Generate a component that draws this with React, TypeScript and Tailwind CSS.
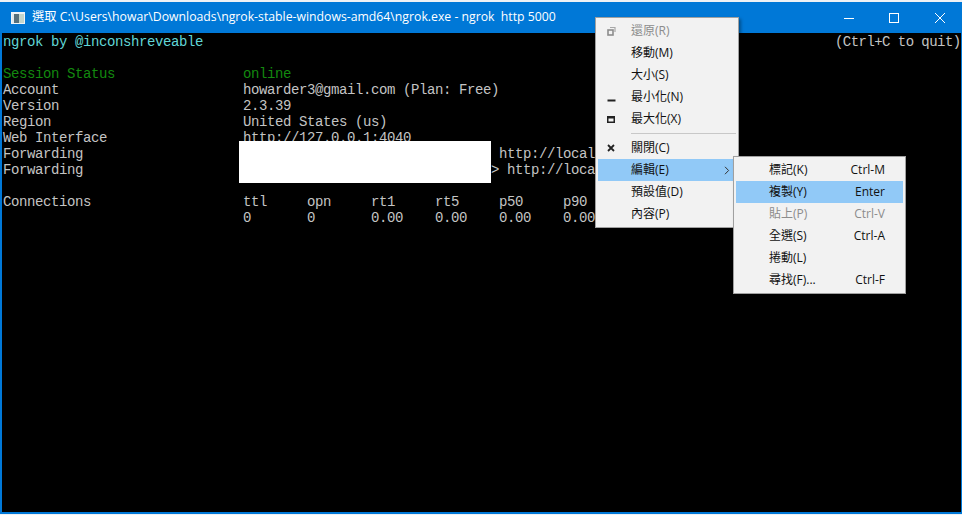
import type { ReactNode } from 'react';

const menuFont = { fontFamily: '"Open Sans", "Noto Sans CJK TC", sans-serif' };

const rows: { text: string; color?: string }[] = [
  { text: '' },
  { text: 'Session Status                online', color: 'text-[#13890f]' },
  { text: 'Account                       howarder3@gmail.com (Plan: Free)' },
  { text: 'Version                       2.3.39' },
  { text: 'Region                        United States (us)' },
  { text: 'Web Interface                 http://127.0.0.1:4040' },
  { text: 'Forwarding                                                    http://local' },
  { text: 'Forwarding                                                   > http://loca' },
  { text: '' },
  { text: 'Connections                   ttl     opn     rt1     rt5     p50     p90' },
  { text: '                              0       0       0.00    0.00    0.00    0.00' },
];

function MenuItem({
  label,
  icon,
  hint,
  disabled,
  active,
  arrow,
}: {
  label: string;
  icon?: ReactNode;
  hint?: string;
  disabled?: boolean;
  active?: boolean;
  arrow?: boolean;
}) {
  return (
    <div
      className={`flex h-[22px] items-center text-[12px] ${active ? 'bg-[#91c9f7]' : ''} ${
        disabled ? 'text-[#8c8c8c]' : 'text-[#111]'
      }`}
    >
      <span className="flex w-[33px] shrink-0 items-center pl-[9px]">{icon}</span>
      <span className="grow">{label}</span>
      {hint && <span className="mr-[18px]">{hint}</span>}
      {arrow && (
        <svg width="6" height="9" viewBox="0 0 6 9" className="mr-[6px]">
          <path d="M1 .8 4.6 4.5 1 8.2" fill="none" stroke="#333" strokeWidth="1" />
        </svg>
      )}
    </div>
  );
}

export default function App() {
  return (
    <div className="flex h-[515px] w-[962px] flex-col overflow-hidden bg-[#eef1f5] pt-[2px]">
      <div className="relative mb-[1px] flex grow flex-col border-b-[2px] border-l-[2px] border-r-[1px] border-[#0078d7]">
        <div className="-ml-[2px] flex h-[31px] shrink-0 items-center bg-[#0078d7] pl-[11px] text-white">
          <svg width="14" height="12" viewBox="0 0 14 12" className="mr-[7px] shrink-0">
            <rect width="14" height="12" fill="#eef3f6" />
            <rect x="1" y="2" width="2" height="9" fill="#e0e8ec" />
            <rect x="3" y="2" width="5" height="9" fill="#55707c" />
            <rect x="8" y="2" width="5" height="9" fill="#c4d6cc" />
          </svg>
          <span className="whitespace-pre text-[12.25px]" style={menuFont}>
            選取 C:\Users\howar\Downloads\ngrok-stable-windows-amd64\ngrok.exe - ngrok  http 5000
          </span>
          <div className="ml-auto flex items-center">
            <svg width="10" height="10" viewBox="0 0 10 10" className="mr-[35px]">
              <path d="M0 5.5h10" stroke="#fff" strokeWidth="1" />
            </svg>
            <svg width="10" height="10" viewBox="0 0 10 10" className="mr-[36px]">
              <rect x=".5" y=".5" width="9" height="9" fill="none" stroke="#fff" />
            </svg>
            <svg width="10" height="10" viewBox="0 0 10 10" className="mr-[16px]">
              <path d="M0 0 10 10M10 0 0 10" stroke="#fff" strokeWidth="1" />
            </svg>
          </div>
        </div>

        <div
          className="grow whitespace-pre bg-black pl-px pt-[1px] text-[14px] leading-4 tracking-[-0.4px] text-[#c4c4c4]"
          style={{ fontFamily: '"Liberation Mono", monospace' }}
        >
          <div className="flex h-4">
            <span className="w-[832px] shrink-0 text-[#61d6d6]">ngrok by @inconshreveable</span>
            <span className="shrink-0 tracking-[-0.55px]">(Ctrl+C to quit)</span>
          </div>
          {rows.map((row, i) => (
            <div key={i} className={`h-4 ${row.color ?? ''}`}>
              {row.text}
            </div>
          ))}
        </div>

        {/* mask over the forwarding addresses */}
        <div className="absolute left-[237px] top-[139px] h-[42px] w-[252px] bg-white" />

        {/* system menu */}
        <div
          className="absolute left-[593px] top-[15px] h-[211px] w-[144px] border border-[#a0a0a0] bg-[#f2f2f2] px-[2px] pt-[2px] shadow-[2px_2px_3px_rgba(0,0,0,0.35)]"
          style={menuFont}
        >
          <MenuItem
            label="還原(R)"
            disabled
            icon={
              <svg width="9" height="10" viewBox="0 0 9 10">
                <path d="M3 1.5h5V6" fill="none" stroke="#a8a8a8" strokeWidth="1.2" />
                <rect x="1" y="4" width="5" height="5" fill="none" stroke="#8c8c8c" strokeWidth="1.6" />
              </svg>
            }
          />
          <MenuItem label="移動(M)" />
          <MenuItem label="大小(S)" />
          <MenuItem
            label="最小化(N)"
            icon={
              <svg width="9" height="9" viewBox="0 0 9 9" className="translate-y-[1px]">
                <path d="M.5 6.5h8" stroke="#222" strokeWidth="2" />
              </svg>
            }
          />
          <MenuItem
            label="最大化(X)"
            icon={
              <svg width="8" height="7" viewBox="0 0 8 7">
                <path d="M0 0h8v7H0zM1.5 2.5v3h5v-3z" fill="#222" fillRule="evenodd" />
              </svg>
            }
          />
          <div className="flex h-[7px] items-center pl-[33px]">
            <div className="h-px w-full bg-[#c8c8c8]" />
          </div>
          <MenuItem
            label="關閉(C)"
            icon={
              <svg width="8" height="8" viewBox="0 0 8 8">
                <path d="M1 1 7 7M7 1 1 7" stroke="#222" strokeWidth="1.8" />
              </svg>
            }
          />
          <MenuItem label="編輯(E)" active arrow />
          <MenuItem label="預設值(D)" />
          <MenuItem label="內容(P)" />
        </div>

        {/* edit submenu */}
        <div
          className="absolute left-[731px] top-[154px] h-[138px] w-[173px] border border-[#a0a0a0] bg-[#f2f2f2] px-[2px] pt-[2px] shadow-[2px_2px_3px_rgba(0,0,0,0.35)]"
          style={menuFont}
        >
          <MenuItem label="標記(K)" hint="Ctrl-M" />
          <MenuItem label="複製(Y)" hint="Enter" active />
          <MenuItem label="貼上(P)" hint="Ctrl-V" disabled />
          <MenuItem label="全選(S)" hint="Ctrl-A" />
          <MenuItem label="捲動(L)" />
          <MenuItem label="尋找(F)..." hint="Ctrl-F" />
        </div>
      </div>
    </div>
  );
}
